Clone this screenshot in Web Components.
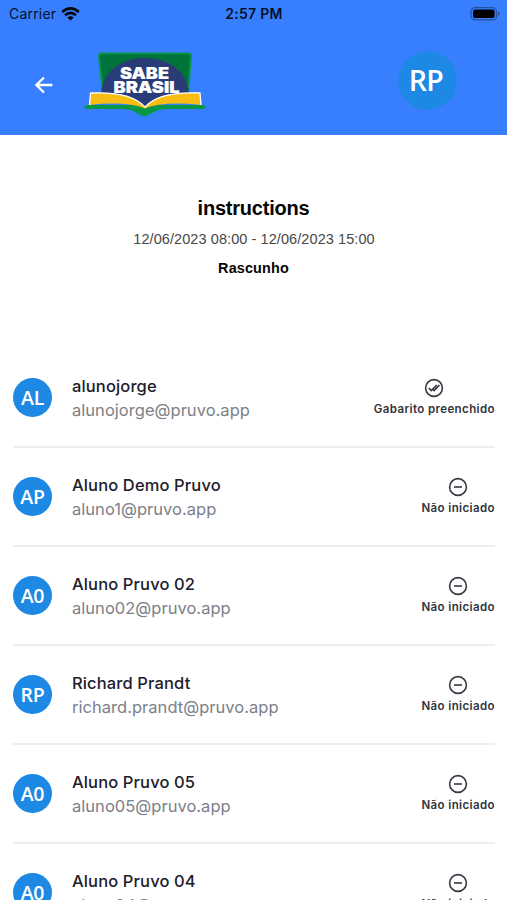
<!DOCTYPE html>
<html lang="pt-BR">
<head>
<meta charset="utf-8">
<title>Sabe Brasil</title>
<style>
html,body{margin:0;height:900px;overflow:hidden;background:#fff}
body{font-family:Inter,"Liberation Sans",sans-serif;color:#1c202b}
</style>
</head>
<body>
<exam-screen></exam-screen>
<script>
const define = (name, html) => customElements.define(name, class extends HTMLElement {
  connectedCallback() {
    if (this.shadowRoot) return;
    const t = document.createElement('template');
    t.innerHTML = typeof html === 'function' ? html(this) : html;
    this.attachShadow({mode: 'open'}).append(t.content.cloneNode(true));
  }
});

define('status-bar', `
<style>
:host{display:grid;grid-template-columns:1fr auto 1fr;align-items:center;height:27px;padding:0 6px 0 9px;color:#06102a;font-size:14px;line-height:27px}
.l{display:flex;align-items:center;gap:5px;letter-spacing:.2px}
.t{font-weight:600;font-size:14px;letter-spacing:.3px;margin-right:2px}
.b{justify-self:end;display:block}
svg{display:block}
</style>
<div class="l"><span>Carrier</span>
<svg width="19" height="14" viewBox="0 0 19 14" fill="none" stroke="#000" stroke-width="2.6"><path d="M1.2 5.1Q9.5-2.2 17.8 5.1M4.1 8.2Q9.5 3.5 14.9 8.2"/><path d="M9.5 13.6 6.4 10.4Q9.5 7.9 12.6 10.4Z" fill="#000" stroke="none"/></svg></div>
<span class="t">2:57 PM</span>
<svg class="b" width="31" height="14" viewBox="0 0 31 14"><rect x="1" y=".7" width="25.5" height="12.2" rx="3.8" fill="none" stroke="#244f9f" stroke-width="1.2"/><rect x="3" y="2.6" width="21.6" height="8.4" rx="2" fill="#000"/><path d="M28 4.700v4.2q1.8-.6 1.8-2.1T28 4.700Z" fill="#244f9f"/></svg>`);

define('user-avatar', `
<style>
:host{display:flex;align-items:center;justify-content:center;flex:none;box-sizing:border-box;width:var(--size,39px);height:var(--size,39px);border-radius:50%;background:#1e88e5;color:#fff;font:600 var(--fs,19.5px)/1 "Open Sans","Noto Sans",sans-serif;letter-spacing:var(--ls,-.3px)}
</style><slot></slot>`);

define('brand-logo', `
<style>:host{display:block;width:124px;height:67px}svg{display:block}text{font-family:Inter,sans-serif;font-weight:900;fill:#fff;stroke:#fff;stroke-width:.2}</style>
<svg width="124" height="67" viewBox="0 0 124 67">
<path d="M18 3.500H103Q107 3.500 107 6L104 43H19L15 6Q15 3.500 18 3.500Z" fill="#00733a" stroke="#079447" stroke-width="2"/>
<path d="M17 47C17 24 34 8 61 8S105 24 105 47L61 58Z" fill="#293c78"/>
<path d="M2 55H51L61 58 71 55H120L121.500 57Q121 59 118 59H86Q74 59 70 62 62 67 60 66 56 66 51 62 47 59 35 59H3Q0 59 .5 57Z" fill="#079747"/>
<path d="M7 43Q47 41 61 57 75 41 116 43L117 55Q79 51 61 58.500 43 51 5 55Z" fill="#f8bd14"/>
<path d="M5.500 55 6.500 43Q47 41 61 57 75 41 116 43L117 55" fill="none" stroke="#fff" stroke-width="1.300"/>
<text x="36" y="29" font-size="16" textLength="49" lengthAdjust="spacingAndGlyphs">SABE</text>
<text x="29.500" y="42.500" font-size="16.200" textLength="66" lengthAdjust="spacingAndGlyphs">BRASIL</text>
</svg>`);

define('app-header', `
<style>
:host{display:block;height:135px;background:#387fff}
.bar{display:flex;align-items:center;height:107px;padding:0 50px 0 34px}
svg{display:block;margin-top:9px}
brand-logo{margin:6px 0 0 30px}
user-avatar{margin-left:auto;--size:59px;--fs:28.5px;--ls:-.6px;padding:0 3px 1px 0}
</style>
<status-bar></status-bar>
<div class="bar">
<svg width="20" height="18" viewBox="0 0 20 18" fill="none" stroke="#fff" stroke-width="2.300"><path d="M18.300 9H3M10 1.500 2.300 9 10 16.500"/></svg>
<brand-logo></brand-logo><user-avatar>RP</user-avatar></div>`);

define('exam-summary', `
<style>
:host{display:flex;flex-direction:column;align-items:center;box-sizing:border-box;height:214px;padding-top:61px;font-family:"Liberation Sans",Arial,sans-serif;color:#050505}
h1{margin:0;font-size:20px;line-height:24px;letter-spacing:-.22px}
p{margin:10px 0 0 1px;font-size:14.5px;line-height:18px;color:#484848;letter-spacing:.08px}
b{margin-top:11px;font-size:14.4px;line-height:18px;letter-spacing:.15px}
</style><h1><slot name="title"></slot></h1><p><slot name="period"></slot></p><b><slot name="state"></slot></b>`);

define('status-icon', el => `
<style>:host{display:block}svg{display:block}</style>
<svg width="20" height="20" viewBox="0 0 20 20" fill="none" stroke="#363a43" stroke-width="1.600"><circle cx="10" cy="10" r="8.400"/>${el.hasAttribute('done') ? '<path d="m4.800 10 2.500 2.500 5.500-5.500M8.300 10.600l1.900 1.900 5.200-5.500" stroke-width="1.700"/>' : '<path d="M6 10h8"/>'}</svg>`);

define('student-row', el => `
<style>
:host{display:flex;box-sizing:border-box;height:99px;margin:0 12px 0 13px;border-bottom:2px solid #eeeeef;align-items:flex-start}
user-avatar{margin-top:29px}
.who{margin:25px 0 0 20px;flex:1;white-space:nowrap}
.name{font-size:16.5px;line-height:24px;font-weight:500;letter-spacing:.13px}
.mail{font-size:16.5px;line-height:25px;color:#7c8089;letter-spacing:.03px}
.st{display:flex;flex-direction:column;align-items:center;margin-top:29px;font-size:11.5px;line-height:16px;font-weight:600;color:#30343d;letter-spacing:.4px;white-space:nowrap}
.st span{margin-top:3px}
</style>
<user-avatar>${el.getAttribute('initials')}</user-avatar>
<div class="who"><div class="name"><slot></slot></div><div class="mail"><slot name="mail"></slot></div></div>
<div class="st"><status-icon ${el.hasAttribute('done') ? 'done' : ''}></status-icon><span>${el.hasAttribute('done') ? 'Gabarito preenchido' : 'Não iniciado'}</span></div>`);

define('exam-screen', `
<style>:host{display:block;width:507px;height:900px;overflow:hidden;background:#fff}</style>
<app-header></app-header>
<exam-summary><span slot="title">instructions</span><span slot="period">12/06/2023 08:00 - 12/06/2023 15:00</span><span slot="state">Rascunho</span></exam-summary>
<student-row initials="AL" done>alunojorge<span slot="mail">alunojorge@pruvo.app</span></student-row>
<student-row initials="AP">Aluno Demo Pruvo<span slot="mail">aluno1@pruvo.app</span></student-row>
<student-row initials="A0">Aluno Pruvo 02<span slot="mail">aluno02@pruvo.app</span></student-row>
<student-row initials="RP">Richard Prandt<span slot="mail">richard.prandt@pruvo.app</span></student-row>
<student-row initials="A0">Aluno Pruvo 05<span slot="mail">aluno05@pruvo.app</span></student-row>
<student-row initials="A0">Aluno Pruvo 04<span slot="mail">aluno04@pruvo.app</span></student-row>`);
</script>
</body>
</html>
